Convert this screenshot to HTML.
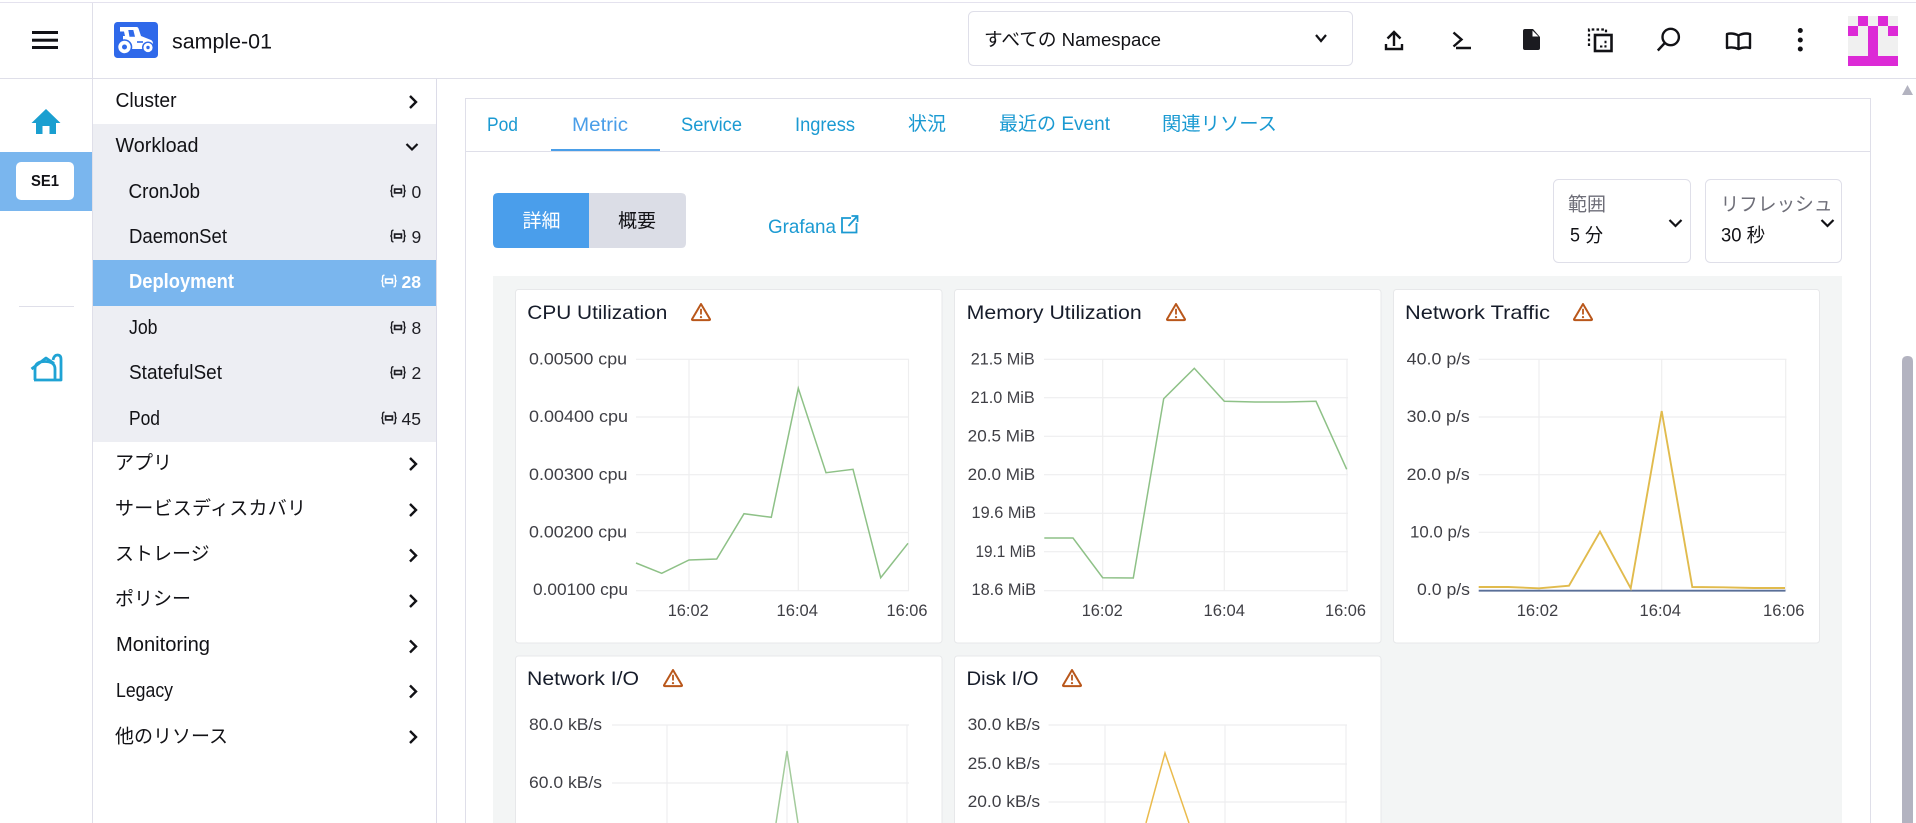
<!DOCTYPE html>
<html lang="ja"><head><meta charset="utf-8"><title>sample-01</title>
<style>
html,body{margin:0;padding:0;background:#fff;width:1916px;height:823px;overflow:hidden}
svg{display:block;position:absolute;left:0;top:0}
text{font-family:"Liberation Sans","Noto Sans CJK JP",sans-serif;fill:#121216}
.side{font-size:20px}
.jp{font-size:19px}
.cnt{font-size:17.5px;fill:#1e1e24}
.tab{font-size:19.5px;fill:#1b9ad2}
.title{font-size:19.5px;fill:#161c2a}
.ax{font-size:17px;fill:#3f3f45}
.grid{stroke:#eeeeef;stroke-width:1.2;fill:none}
.card{fill:#fff;stroke:#e7e8ea;stroke-width:1}
.chev{fill:none;stroke:#121216;stroke-width:2.2}
.ic{fill:none;stroke:#121216;stroke-width:2.4}
</style></head><body>
<svg width="1916" height="823" viewBox="0 0 1916 823" xmlns="http://www.w3.org/2000/svg">
<defs>
<g id="kube"><path d="M3.5 .7Q1.6 .7 1.6 2.6V4.8Q1.6 6.5 .3 6.5Q1.6 6.5 1.6 8.2V10.4Q1.6 12.3 3.5 12.3M12.5 .7Q14.4 .7 14.4 2.6V4.8Q14.4 6.5 15.7 6.5Q14.4 6.5 14.4 8.2V10.4Q14.4 12.3 12.5 12.3" fill="none" stroke="currentColor" stroke-width="1.4"/><rect x="4.6" y="4.6" width="6.8" height="3.8" fill="none" stroke="currentColor" stroke-width="1.7"/></g>
<g id="warn"><path d="M10 1.5L19 16.8Q19.2 17.6 18.3 17.6H1.7Q.8 17.6 1 16.8Z" fill="none" stroke="#b9571b" stroke-width="2" stroke-linejoin="round"/><path d="M10 6.3V12" stroke="#b9571b" stroke-width="1.8"/><circle cx="10" cy="14.6" r="1.1" fill="#b9571b"/></g>
<path id="cr" d="M0 0L6 6L0 12" fill="none" stroke="#121216" stroke-width="2.4"/>
</defs>

<!-- frame -->
<rect x="0" y="2" width="1916" height="1" fill="#e4e2ee"/>
<rect x="92" y="3" width="1" height="820" fill="#dfdfe9"/>
<rect x="0" y="78" width="1916" height="1" fill="#dfdfe9"/>
<rect x="436" y="79" width="1" height="744" fill="#dcdce8"/>

<!-- hamburger -->
<g fill="#121216"><rect x="32" y="31" width="26" height="3"/><rect x="32" y="38.7" width="26" height="3"/><rect x="32" y="46" width="26" height="3"/></g>

<!-- logo -->
<rect x="114" y="22" width="44" height="36" rx="3.5" fill="#2f69ea"/>
<path d="M120 27H136.5Q138 27 138.5 28.5L141 36L151 40Q153 41 153 44V49H131Q131 41 124.5 40H123V36H125L124 31.5H120Z" fill="#fff"/>
<path d="M128.3 30H133.3L135 36.7H129.5Z" fill="#2f69ea"/>
<circle cx="124.5" cy="47" r="7.8" fill="#2f69ea"/>
<circle cx="124.5" cy="47" r="6.2" fill="#fff"/><circle cx="124.5" cy="47" r="2.5" fill="#2f69ea"/>
<circle cx="148" cy="47.5" r="6" fill="#2f69ea"/>
<circle cx="148" cy="47.5" r="4.6" fill="#fff"/><circle cx="148" cy="47.5" r="1.7" fill="#2f69ea"/>
<path d="M137 42H143" stroke="#2f69ea" stroke-width="1.6"/>
<text x="172" y="48.5" font-size="21.5" textLength="100" lengthAdjust="spacingAndGlyphs">sample-01</text>

<!-- namespace select -->
<rect x="968.5" y="11.5" width="384" height="54" rx="5" fill="#fff" stroke="#dfdfe9"/>
<text x="984" y="46" font-size="18.5" textLength="177" lengthAdjust="spacingAndGlyphs">すべての Namespace</text>
<path d="M1316 35L1321 41L1326 35" class="chev"/>

<!-- header icons -->
<path d="M1394 46V32M1387.5 38.5L1394 32L1400.5 38.5M1386 44V49H1402V44" class="ic"/>
<path d="M1453.5 32.5L1461.5 39.5L1453.5 46.5M1456 48H1471" class="ic"/>
<path d="M1525 29H1533L1540 37V48Q1540 50 1538 50H1525Q1523 50 1523 48V31Q1523 29 1525 29Z" fill="#1b1b20"/>
<path d="M1532.5 30.5V36.5H1538.5Z" fill="#fff"/>
<path d="M1589 46V29.5H1606V34" fill="none" stroke="#121216" stroke-width="2.2" stroke-dasharray="2.6 2.2"/>
<rect x="1595" y="35" width="16.5" height="16" fill="none" stroke="#121216" stroke-width="2.6"/>
<path d="M1600 46.5H1605.5V40.5" fill="none" stroke="#121216" stroke-width="2" stroke-dasharray="2.4 2"/>
<circle cx="1670.7" cy="37" r="8.2" class="ic"/><path d="M1664.8 43L1657.8 50.5" class="ic"/>
<path d="M1738.5 35.5Q1733 32.5 1727 34V48Q1733 46.5 1738.5 49Q1744 46.5 1750 48V34Q1744 32.5 1738.5 35.5ZM1738.5 35.5V49" class="ic" stroke-linejoin="round"/>
<g fill="#121216"><circle cx="1800.3" cy="30.5" r="2.5"/><circle cx="1800.3" cy="40" r="2.5"/><circle cx="1800.3" cy="49" r="2.5"/></g>

<!-- identicon -->
<rect x="1848" y="16" width="50" height="50" fill="#f0f0f0"/>
<g fill="#dc2ad6"><rect x="1858" y="16" width="10" height="10"/><rect x="1878" y="16" width="10" height="10"/><rect x="1848" y="26" width="10" height="10"/><rect x="1868" y="26" width="10" height="30"/><rect x="1888" y="26" width="10" height="10"/><rect x="1848" y="56" width="50" height="10"/></g>

<!-- rail -->
<path d="M46 109L60.5 123H56V134H49.5V126H42.5V134H36V123H31.5Z" fill="#1a9fd0"/>
<rect x="0" y="152" width="92" height="59" fill="#7ab6ee"/>
<rect x="16" y="162" width="58" height="38" rx="5" fill="#fff"/>
<text x="31" y="186" font-size="16" font-weight="700" textLength="28" lengthAdjust="spacingAndGlyphs">SE1</text>
<rect x="19" y="306" width="55" height="1" fill="#dfdfe9"/>
<path d="M31.5 369L46 358L54 363.5M35 380V369Q35 361.5 45 361.5Q55 361.5 55 369V380M34 380H61V359.5Q61 355 57.5 355Q54 355 53 360" fill="none" stroke="#1fa3d4" stroke-width="2.8" stroke-linejoin="round"/>

<!-- sidebar -->
<rect x="93" y="124" width="343" height="318" fill="#edeef3"/>
<rect x="93" y="260" width="343" height="46" fill="#7ab6ee"/>
<text class="side" x="115.5" y="107" textLength="61" lengthAdjust="spacingAndGlyphs">Cluster</text>
<text class="side" x="115.5" y="152" textLength="83" lengthAdjust="spacingAndGlyphs">Workload</text>
<text class="side" x="128.5" y="198" textLength="71.5" lengthAdjust="spacingAndGlyphs">CronJob</text>
<text class="side" x="129" y="243" textLength="98" lengthAdjust="spacingAndGlyphs">DaemonSet</text>
<text class="side" x="129" y="288" textLength="105" lengthAdjust="spacingAndGlyphs" font-weight="700" style="fill:#fff">Deployment</text>
<text class="side" x="129" y="334" textLength="28.5" lengthAdjust="spacingAndGlyphs">Job</text>
<text class="side" x="129" y="379" textLength="93" lengthAdjust="spacingAndGlyphs">StatefulSet</text>
<text class="side" x="129" y="425" textLength="31" lengthAdjust="spacingAndGlyphs">Pod</text>
<text class="jp" x="115" y="469">アプリ</text>
<text class="jp" x="115" y="514.5" textLength="191">サービスディスカバリ</text>
<text class="jp" x="115" y="560">ストレージ</text>
<text class="jp" x="115" y="605">ポリシー</text>
<text class="side" x="116" y="651" textLength="94" lengthAdjust="spacingAndGlyphs">Monitoring</text>
<text class="side" x="116" y="697" textLength="57" lengthAdjust="spacingAndGlyphs">Legacy</text>
<text class="jp" x="115" y="742.5">他のリソース</text>

<g color="#1e1e24">
<use href="#kube" x="390" y="184.5"/><text class="cnt" x="411.5" y="198">0</text>
<use href="#kube" x="390" y="229.5"/><text class="cnt" x="411.5" y="243">9</text>
<use href="#kube" x="381" y="274.5" color="#fff"/><text class="cnt" x="401.5" y="288" font-weight="700" style="fill:#fff">28</text>
<use href="#kube" x="390" y="321"/><text class="cnt" x="411.5" y="334">8</text>
<use href="#kube" x="390" y="366"/><text class="cnt" x="411.5" y="379">2</text>
<use href="#kube" x="381" y="411.5"/><text class="cnt" x="401.5" y="425">45</text>
</g>

<use href="#cr" x="410" y="96"/>
<path d="M406.5 144L412 149.5L417.5 144" class="chev" stroke-width="2.4"/>
<use href="#cr" x="410" y="458"/><use href="#cr" x="410" y="504"/><use href="#cr" x="410" y="549.5"/>
<use href="#cr" x="410" y="595"/><use href="#cr" x="410" y="640.5"/><use href="#cr" x="410" y="685.5"/><use href="#cr" x="410" y="731"/>

<!-- content card -->
<path d="M465.5 823V98.5H1870.5V823" fill="#fff" stroke="#dfdfe9"/>
<rect x="466" y="151" width="1404" height="1" fill="#dfdfe9"/>
<rect x="551" y="149" width="109" height="2" fill="#4a9ee8"/>
<text class="tab" x="487" y="131" textLength="31" lengthAdjust="spacingAndGlyphs">Pod</text>
<text class="tab" x="572" y="131" textLength="56" lengthAdjust="spacingAndGlyphs" style="fill:#4a9ee8">Metric</text>
<text class="tab" x="681" y="131" textLength="61" lengthAdjust="spacingAndGlyphs">Service</text>
<text class="tab" x="795" y="131" textLength="60" lengthAdjust="spacingAndGlyphs">Ingress</text>
<text class="tab" x="908" y="130" style="font-size:19px" textLength="38" lengthAdjust="spacingAndGlyphs">状況</text>
<text class="tab" x="999" y="130" style="font-size:19px" textLength="111" lengthAdjust="spacingAndGlyphs">最近の Event</text>
<text class="tab" x="1162" y="130" style="font-size:19px" textLength="115" lengthAdjust="spacingAndGlyphs">関連リソース</text>

<!-- toggle -->
<path d="M498 193H589V248H498Q493 248 493 243V198Q493 193 498 193Z" fill="#4a9eeb"/>
<path d="M589 193H681Q686 193 686 198V243Q686 248 681 248H589Z" fill="#dbdde6"/>
<text x="522.5" y="227" font-size="19" style="fill:#fff">詳細</text>
<text x="618" y="227" font-size="19">概要</text>
<text class="tab" x="768" y="233" textLength="68" lengthAdjust="spacingAndGlyphs">Grafana</text>
<path d="M851 218H842V232.5H856.5V223M848.5 226L857 216.5M851.5 216H857.5V222" fill="none" stroke="#1b9ad2" stroke-width="1.8"/>

<!-- selects -->
<rect x="1553.5" y="179.5" width="137" height="83" rx="5" fill="#fff" stroke="#dfdfe9"/>
<rect x="1705.5" y="179.5" width="136" height="83" rx="5" fill="#fff" stroke="#dfdfe9"/>
<text x="1568" y="210.5" font-size="19" style="fill:#6e6e78">範囲</text>
<text x="1570" y="241.5" font-size="19" textLength="33" lengthAdjust="spacingAndGlyphs">5 分</text>
<text x="1720.5" y="210.5" font-size="19" style="fill:#6e6e78" textLength="112" lengthAdjust="spacingAndGlyphs">リフレッシュ</text>
<text x="1721" y="241.5" font-size="19" textLength="44" lengthAdjust="spacingAndGlyphs">30 秒</text>
<path d="M1669.5 220L1675.5 226L1681.5 220M1821.5 220L1827.5 226L1833.5 220" class="chev" stroke-width="2.4"/>

<!-- grafana area -->
<rect x="493" y="276" width="1349" height="547" fill="#f3f5f5"/>
<rect class="card" x="515.5" y="289.5" width="426.5" height="353.5" rx="3"/>
<rect class="card" x="954.5" y="289.5" width="426.5" height="353.5" rx="3"/>
<rect class="card" x="1393.5" y="289.5" width="426" height="353.5" rx="3"/>
<rect class="card" x="515.5" y="656" width="426.5" height="180" rx="3"/>
<rect class="card" x="954.5" y="656" width="426.5" height="180" rx="3"/>

<!-- titles -->
<text class="title" x="527.3" y="319" textLength="140" lengthAdjust="spacingAndGlyphs">CPU Utilization</text><use href="#warn" x="691" y="302.5"/>
<text class="title" x="966.7" y="319" textLength="175" lengthAdjust="spacingAndGlyphs">Memory Utilization</text><use href="#warn" x="1166" y="302.5"/>
<text class="title" x="1405" y="319" textLength="145" lengthAdjust="spacingAndGlyphs">Network Traffic</text><use href="#warn" x="1573" y="302.5"/>
<text class="title" x="527" y="685" textLength="112" lengthAdjust="spacingAndGlyphs">Network I/O</text><use href="#warn" x="663" y="668.5"/>
<text class="title" x="966.5" y="685" textLength="72" lengthAdjust="spacingAndGlyphs">Disk I/O</text><use href="#warn" x="1062" y="668.5"/>

<!-- CPU chart -->
<path class="grid" d="M636 359.3H909M636 417H909M636 474.7H909M636 532.5H909M636 590.7H909M689 359.3V590.7M798.3 359.3V590.7M908.5 359.3V590.7"/>
<text class="ax" x="529" y="364.5" textLength="98" lengthAdjust="spacingAndGlyphs">0.00500 cpu</text>
<text class="ax" x="529" y="422" textLength="99" lengthAdjust="spacingAndGlyphs">0.00400 cpu</text>
<text class="ax" x="529" y="480" textLength="98.5" lengthAdjust="spacingAndGlyphs">0.00300 cpu</text>
<text class="ax" x="529" y="537.5" textLength="98" lengthAdjust="spacingAndGlyphs">0.00200 cpu</text>
<text class="ax" x="533" y="595" textLength="95" lengthAdjust="spacingAndGlyphs">0.00100 cpu</text>
<text class="ax" x="667.7" y="616" textLength="41" lengthAdjust="spacingAndGlyphs">16:02</text>
<text class="ax" x="776.5" y="616" textLength="41.5" lengthAdjust="spacingAndGlyphs">16:04</text>
<text class="ax" x="886.5" y="616" textLength="41" lengthAdjust="spacingAndGlyphs">16:06</text>
<polyline fill="none" stroke="#8ec187" stroke-width="1.5" points="636,563 661.7,573.3 689,560 716.7,559 744,513.7 771.3,517.3 798.3,388.3 826,472.7 853,469.3 880.7,577.7 908,543.3"/>

<!-- Memory chart -->
<path class="grid" d="M1044 359.3H1348M1044 397.7H1348M1044 436.3H1348M1044 474.7H1348M1044 513.3H1348M1044 551.7H1348M1044 590.7H1348M1102.7 359.3V590.7M1224.3 359.3V590.7M1347 359.3V590.7"/>
<text class="ax" x="970.7" y="364.5" textLength="64" lengthAdjust="spacingAndGlyphs">21.5 MiB</text>
<text class="ax" x="970.7" y="403" textLength="64" lengthAdjust="spacingAndGlyphs">21.0 MiB</text>
<text class="ax" x="967.7" y="441.5" textLength="67.5" lengthAdjust="spacingAndGlyphs">20.5 MiB</text>
<text class="ax" x="967.7" y="480" textLength="67.5" lengthAdjust="spacingAndGlyphs">20.0 MiB</text>
<text class="ax" x="971.5" y="518" textLength="64.5" lengthAdjust="spacingAndGlyphs">19.6 MiB</text>
<text class="ax" x="975.5" y="557" textLength="60.5" lengthAdjust="spacingAndGlyphs">19.1 MiB</text>
<text class="ax" x="971.5" y="595" textLength="64.5" lengthAdjust="spacingAndGlyphs">18.6 MiB</text>
<text class="ax" x="1081.7" y="616" textLength="41" lengthAdjust="spacingAndGlyphs">16:02</text>
<text class="ax" x="1203.5" y="616" textLength="41.5" lengthAdjust="spacingAndGlyphs">16:04</text>
<text class="ax" x="1325" y="616" textLength="41" lengthAdjust="spacingAndGlyphs">16:06</text>
<polyline fill="none" stroke="#8ec187" stroke-width="1.5" points="1044.3,538 1073,538 1102.7,577.7 1133.3,578 1163.7,398.7 1194.3,368.3 1224.3,401.3 1255,402 1285.7,402 1316,401.3 1346.7,469.3"/>

<!-- Traffic chart -->
<path class="grid" d="M1478.7 359.3H1786.5M1478.7 417H1786.5M1478.7 474.7H1786.5M1478.7 532.3H1786.5M1539 359.3V590.7M1661.7 359.3V590.7M1785.7 359.3V590.7"/>
<text class="ax" x="1406.7" y="364.5" textLength="63.5" lengthAdjust="spacingAndGlyphs">40.0 p/s</text>
<text class="ax" x="1406.7" y="422" textLength="63" lengthAdjust="spacingAndGlyphs">30.0 p/s</text>
<text class="ax" x="1406.7" y="480" textLength="63" lengthAdjust="spacingAndGlyphs">20.0 p/s</text>
<text class="ax" x="1410" y="537.5" textLength="60" lengthAdjust="spacingAndGlyphs">10.0 p/s</text>
<text class="ax" x="1417" y="595" textLength="53" lengthAdjust="spacingAndGlyphs">0.0 p/s</text>
<text class="ax" x="1516.7" y="616" textLength="41.5" lengthAdjust="spacingAndGlyphs">16:02</text>
<text class="ax" x="1639.5" y="616" textLength="41.5" lengthAdjust="spacingAndGlyphs">16:04</text>
<text class="ax" x="1763" y="616" textLength="41.5" lengthAdjust="spacingAndGlyphs">16:06</text>
<path d="M1478.7 590.7H1785.5" stroke="#5a6f98" stroke-width="1.8" fill="none"/>
<polyline fill="none" stroke="#e1bb4d" stroke-width="1.9" points="1478.7,587 1508.3,587 1539,588.3 1569,585.7 1600,531.7 1630.7,588.3 1661.7,411 1692.3,587 1723.3,587.3 1754,588 1785,588"/>

<!-- Network I/O chart -->
<path class="grid" d="M612 725H909M612 783H909M667 725V830M787 725V830M907 725V830"/>
<text class="ax" x="529" y="730" textLength="73" lengthAdjust="spacingAndGlyphs">80.0 kB/s</text>
<text class="ax" x="529" y="788" textLength="73" lengthAdjust="spacingAndGlyphs">60.0 kB/s</text>
<path d="M776 823L787 751L798 823" fill="none" stroke="#a3cb9c" stroke-width="1.5"/>

<!-- Disk I/O chart -->
<path class="grid" d="M1048.5 725H1347M1048.5 764H1347M1048.5 802H1347M1105 725V830M1225 725V830M1346 725V830"/>
<text class="ax" x="967.6" y="730" textLength="72.5" lengthAdjust="spacingAndGlyphs">30.0 kB/s</text>
<text class="ax" x="967.6" y="769" textLength="72.5" lengthAdjust="spacingAndGlyphs">25.0 kB/s</text>
<text class="ax" x="967.6" y="807" textLength="72.5" lengthAdjust="spacingAndGlyphs">20.0 kB/s</text>
<path d="M1146 823L1165 753L1189 823" fill="none" stroke="#eabb4d" stroke-width="1.5"/>

<!-- scrollbar -->
<path d="M1907.5 85L1913 95H1902Z" fill="#b3b3c0"/>
<path d="M1902 823V361.5Q1902 356 1907.5 356Q1913 356 1913 361.5V823Z" fill="#b3b3c0"/>
</svg>
</body></html>
